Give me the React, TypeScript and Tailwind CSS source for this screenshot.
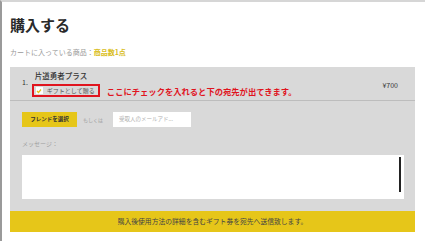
const jp = '"Noto Sans CJK JP", "Noto Sans", sans-serif';

export default function App() {
  return (
    <div
      className="w-[425px] h-[241px] overflow-hidden bg-white border-t-2 border-t-[#d6d6d6] border-l-2 border-l-[#9a9a9a]"
      style={{ fontFamily: jp }}
    >
      <div className="pl-[8px] pt-[12px]">
        <h1 className="text-[15px] leading-[22px] font-bold text-[#2a2a2a]">購入する</h1>
        <p className="mt-[11px] text-[7px] leading-[10px] text-[#9a9a9a]">
          カートに入っている商品：<span className="font-bold text-[#d9bd1c]">商品数1点</span>
        </p>
      </div>

      <div className="ml-[8px] mt-[10px] w-[405px] bg-[#d9d9d9]">
        {/* item row */}
        <div className="flex h-[34px] border-b border-[#bdbdbd] pl-[12px] pr-[17px]">
          <span className="mt-[10px] text-[7px] leading-[10px] text-[#333]">1.</span>
          <div className="ml-[7px] flex flex-col">
            <span className="mt-[4px] text-[7.5px] leading-[10px] font-medium text-[#333]">片道勇者プラス</span>
            <div className="mt-[3px] flex items-center">
              <div className="flex h-[13px] w-[68px] -ml-[3px] items-center border-2 border-[#e0141e] pl-[2px]">
                <span className="flex h-[7px] w-[7px] items-center justify-center bg-white">
                  <svg width="6" height="6" viewBox="0 0 6 6">
                    <path d="M1 3 L2.5 4.5 L5 1.5" fill="none" stroke="#e6c21a" strokeWidth="1.2" />
                  </svg>
                </span>
                <span className="ml-[4px] text-[6px] leading-[8px] text-[#555]">ギフトとして贈る</span>
              </div>
              <span className="ml-[7px] mt-[1px] text-[8.3px] leading-[10px] font-bold text-[#e0141e]">
                ここにチェックを入れると下の宛先が出てきます。
              </span>
            </div>
          </div>
          <span className="ml-auto mt-[13px] text-[7px] leading-[10px] text-[#333]">¥700</span>
        </div>

        {/* gift form */}
        <div className="px-[12px] pt-[11px] pb-[12px]">
          <div className="flex items-center">
            <button className="h-[15px] w-[55px] bg-[#e6c619] text-[5.5px] font-bold text-[#333]">
              フレンドを選択
            </button>
            <span className="ml-[6px] text-[5px] text-[#a0a0a0]">もしくは</span>
            <div className="ml-[10px] flex h-[15px] w-[78px] items-center bg-white pl-[6px] text-[5.5px] text-[#b0b0b0]">
              受取人のメールアド...
            </div>
          </div>
          <p className="mt-[12px] text-[6px] leading-[10px] text-[#a0a0a0]">メッセージ：</p>
          <div className="mt-[6px] flex h-[44px] w-[382px] justify-end bg-white pr-[3px] pt-[2px]">
            <div className="h-[35px] w-[2px] bg-[#222]" />
          </div>
        </div>

        {/* notice bar */}
        <div className="flex h-[21px] items-center justify-center bg-[#e6c619] text-[6.8px] text-[#444]">
          購入後使用方法の詳細を含むギフト券を宛先へ送信致します。
        </div>
      </div>
    </div>
  );
}
